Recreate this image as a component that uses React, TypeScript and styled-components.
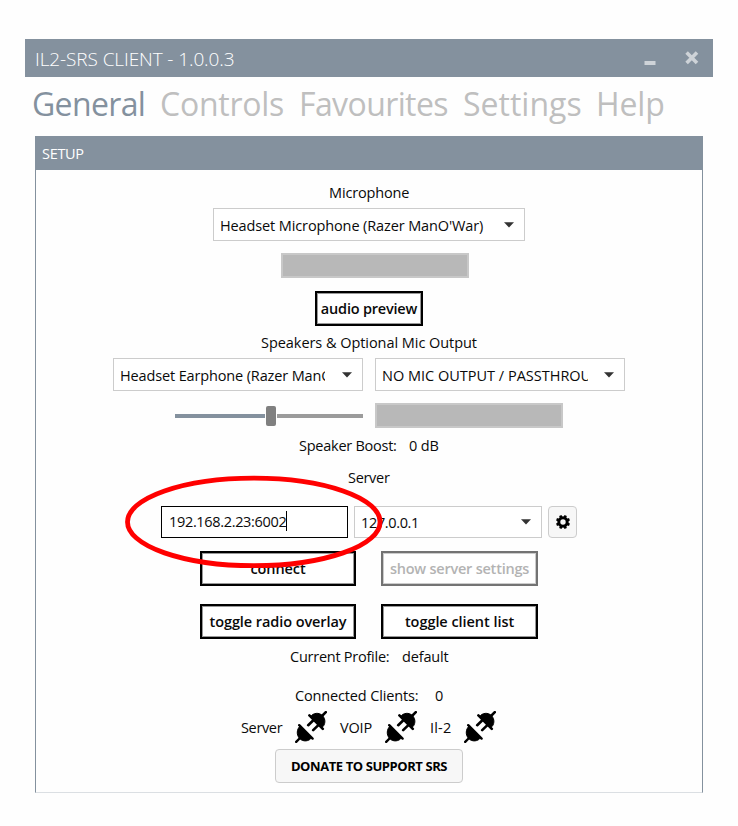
import React from "react";
import styled, { createGlobalStyle } from "styled-components";

const accent = "#84919e";

const GlobalStyle = createGlobalStyle`
  * { box-sizing: border-box; }
  body {
    margin: 0;
    background: #fefefe;
    font-family: "Open Sans", "Noto Sans", sans-serif;
    font-size: 14.5px;
    color: #0a0a0a;
  }
`;

const Page = styled.div`
  position: relative;
  width: 738px;
  height: 826px;
  padding: 39px 25px 0;
`;

const TitleBar = styled.header`
  display: flex;
  align-items: center;
  height: 38px;
  padding: 0 14px 0 10px;
  background: ${accent};
  color: #fff;
`;

const Title = styled.h1`
  flex: 1;
  margin: 0;
  font-size: 19px;
  font-weight: 300;
  line-height: 38px;
  padding-top: 1px;
  letter-spacing: -0.1px;
`;

const WindowButtons = styled.div`
  display: flex;
  gap: 29px;
  align-items: center;
`;

const Tabs = styled.nav`
  display: flex;
  height: 59px;
  padding-left: 7px;
  font-size: 32px;
  line-height: 53px;
`;

const Tab = styled.span<{ $width: number; $active?: boolean; $spacing?: number }>`
  flex: none;
  width: ${(p) => p.$width}px;
  white-space: nowrap;
  letter-spacing: ${(p) => p.$spacing ?? 0}px;
  color: ${(p) => (p.$active ? accent : "#bfbfbf")};
`;

const Panel = styled.section`
  width: 668px;
  height: 657px;
  margin-left: 10px;
  border: 1px solid ${accent};
  border-top: 0;
  border-bottom-color: #dbdfe3;
`;

const PanelHeader = styled.div`
  height: 34px;
  margin: 0 -1px;
  padding-left: 7px;
  line-height: 35px;
  background: ${accent};
  color: #fff;
  letter-spacing: -0.3px;
`;

const Row = styled.div<{ $top?: number; $left: number; $gap?: number; $height: number }>`
  display: flex;
  align-items: center;
  height: ${(p) => p.$height}px;
  margin-top: ${(p) => p.$top ?? 0}px;
  padding-left: ${(p) => p.$left}px;
  gap: ${(p) => p.$gap ?? 0}px;
`;

const Label = styled.span<{ $spacing?: number; $width?: number }>`
  flex: none;
  width: ${(p) => (p.$width ? `${p.$width}px` : "auto")};
  line-height: 20px;
  white-space: nowrap;
  letter-spacing: ${(p) => p.$spacing ?? -0.15}px;
`;

const StatusLabel = styled(Label)<{ $before?: number }>`
  margin-left: ${(p) => p.$before ?? 0}px;
  padding-top: 2px;
`;

const SelectBox = styled.div<{ $width: number; $height?: number }>`
  flex: none;
  display: flex;
  align-items: center;
  justify-content: space-between;
  width: ${(p) => p.$width}px;
  height: ${(p) => p.$height ?? 33}px;
  padding: 0 10px 0 6px;
  border: 1px solid #cccccc;
  background: #fff;
`;

const SelectValue = styled.span<{ $spacing: number; $width: number }>`
  width: ${(p) => p.$width}px;
  overflow: hidden;
  white-space: nowrap;
  line-height: 22px;
  padding-top: 2px;
  letter-spacing: ${(p) => p.$spacing}px;
`;

const Meter = styled.div`
  flex: none;
  width: 188px;
  height: 25px;
  border: 2px solid #c8c8c8;
  background: #b8b8b8;
`;

const Slider = styled.div`
  flex: none;
  display: flex;
  align-items: center;
  gap: 1px;
  width: 188px;
`;

const Track = styled.div<{ $width: number; $color: string }>`
  width: ${(p) => p.$width}px;
  height: 4px;
  background: ${(p) => p.$color};
`;

const Thumb = styled.div`
  width: 10px;
  height: 20px;
  border-radius: 2px;
  background: #808080;
`;

const SquareButton = styled.button<{ $width: number; $spacing?: number }>`
  flex: none;
  width: ${(p) => p.$width}px;
  height: 35px;
  padding: 0;
  border: 2px solid #000;
  box-shadow: inset 0 0 0 1px #999;
  background: #fff;
  color: #0a0a0a;
  font: 600 14.5px "Open Sans", sans-serif;
  letter-spacing: ${(p) => p.$spacing ?? 0}px;
  white-space: nowrap;
  &:disabled {
    border-color: #737373;
    box-shadow: inset 0 0 0 1px #ccc;
    color: #b3b3b3;
  }
`;

const AddressField = styled.div`
  flex: none;
  display: flex;
  align-items: center;
  width: 187px;
  height: 32px;
  padding: 0 0 2px 7px;
  border: 1px solid #000;
  background: #fff;
  letter-spacing: -0.33px;
`;

const Caret = styled.i`
  width: 1px;
  height: 20px;
  background: #000;
`;

const SoftButton = styled.button<{ $width: number; $height: number }>`
  flex: none;
  display: flex;
  align-items: center;
  justify-content: center;
  width: ${(p) => p.$width}px;
  height: ${(p) => p.$height}px;
  padding: 0;
  border: 1px solid #cccccc;
  border-radius: 4px;
  background: #f7f7f7;
  color: #000;
  font: 700 13px "Open Sans", sans-serif;
  letter-spacing: -0.42px;
  white-space: nowrap;
`;

const Highlight = styled.svg`
  position: absolute;
  left: 120px;
  top: 470px;
  pointer-events: none;
`;

const Arrow = () => (
  <svg width="10" height="6" viewBox="0 0 10 6">
    <path d="M0 0.2h10L5 5.6z" fill="#333" />
  </svg>
);

const Select = ({ text, width, textWidth, spacing, height }: {
  text: string; width: number; textWidth: number; spacing: number; height?: number;
}) => (
  <SelectBox $width={width} $height={height}>
    <SelectValue $width={textWidth} $spacing={spacing}>{text}</SelectValue>
    <Arrow />
  </SelectBox>
);

const Gear = () => (
  <svg width="14" height="14" viewBox="-7 -7 14 14">
    <circle r="4.2" fill="none" stroke="#000" strokeWidth="3" />
    {[0, 1, 2, 3, 4, 5, 6, 7].map((i) => (
      <rect key={i} x="-1.3" y="-7" width="2.6" height="2.6" transform={`rotate(${22.5 + i * 45})`} />
    ))}
  </svg>
);

const Plug = () => (
  <svg width="32" height="32" viewBox="0 0 32 32" stroke="#000" strokeLinecap="round">
    <path d="M4.2 14.2 17.6 27.6M1.2 30.8 5 27" strokeWidth="2.4" />
    <path d="M5 15.2 16.6 26.8C14 30.4 8 31.2 4.6 27.4C1.2 24 1.6 18 5 15.2z" strokeWidth="1" />
    <path d="M14.4 4.4 27.8 17.8M30.8 1.2 27 5M18.6 9 13.2 14.2M23.6 13.8 18.2 19.2" strokeWidth="2.6" />
    <path d="M15.6 5.6 26.8 16.8C30.6 13.8 31 8 27.4 4.6C24 1.2 18.4 1.6 15.6 5.6z" strokeWidth="1" />
  </svg>
);

export default function App() {
  return (
    <>
      <GlobalStyle />
      <Page>
        <TitleBar>
          <Title>IL2-SRS CLIENT - 1.0.0.3</Title>
          <WindowButtons>
            <svg width="12" height="14" viewBox="0 0 12 14">
              <path d="M0.5 10h11v4h-11z" fill="#ced3d8" />
            </svg>
            <svg width="14" height="14" viewBox="0 0 14 14">
              <path d="M1.6 1.6 12 12M12 1.6 1.6 12" stroke="#ced3d8" strokeWidth="3.6" />
            </svg>
          </WindowButtons>
        </TitleBar>
        <Tabs>
          <Tab $width={128} $active $spacing={-0.65}>General</Tab>
          <Tab $width={139} $spacing={-0.25}>Controls</Tab>
          <Tab $width={164} $spacing={-0.6}>Favourites</Tab>
          <Tab $width={133} $spacing={0}>Settings</Tab>
          <Tab $width={80} $spacing={-0.1}>Help</Tab>
        </Tabs>
        <Panel>
          <PanelHeader>SETUP</PanelHeader>
          <Row $top={13} $left={293} $height={20}>
            <Label>Microphone</Label>
          </Row>
          <Row $top={5} $left={177} $height={33}>
            <Select text="Headset Microphone (Razer ManO'War)" width={312} textWidth={270} spacing={-0.12} />
          </Row>
          <Row $top={12} $left={245} $height={25}>
            <Meter />
          </Row>
          <Row $top={13} $left={279} $height={35}>
            <SquareButton $width={108} $spacing={-0.2}>audio preview</SquareButton>
          </Row>
          <Row $top={7} $left={225} $height={20}>
            <Label $spacing={-0.05}>Speakers &amp; Optional Mic Output</Label>
          </Row>
          <Row $top={5} $left={77} $gap={12} $height={33}>
            <Select text="Headset Earphone (Razer ManO'War)" width={250} textWidth={205} spacing={-0.14} />
            <Select text="NO MIC OUTPUT / PASSTHROUGH" width={250} textWidth={206} spacing={0} />
          </Row>
          <Row $top={12} $left={139} $gap={12} $height={25}>
            <Slider>
              <Track $width={90} $color={accent} />
              <Thumb />
              <Track $width={86} $color="#9b9b9b" />
            </Slider>
            <Meter />
          </Row>
          <Row $top={8} $left={263} $height={20}>
            <Label $width={110} $spacing={-0.25}>Speaker Boost:</Label>
            <Label>0 dB</Label>
          </Row>
          <Row $top={12} $left={312} $height={20}>
            <Label $spacing={-0.3}>Server</Label>
          </Row>
          <Row $top={18} $left={125} $gap={6} $height={32}>
            <AddressField>192.168.2.23:6002<Caret /></AddressField>
            <Select text="127.0.0.1" width={188} textWidth={120} spacing={-0.35} height={32} />
            <SoftButton $width={29} $height={32} aria-label="Server options"><Gear /></SoftButton>
          </Row>
          <Row $top={13} $left={164} $gap={25} $height={35}>
            <SquareButton $width={156} $spacing={-0.1}>connect</SquareButton>
            <SquareButton $width={157} $spacing={-0.23} disabled>show server settings</SquareButton>
          </Row>
          <Row $top={18} $left={164} $gap={25} $height={35}>
            <SquareButton $width={156} $spacing={-0.08}>toggle radio overlay</SquareButton>
            <SquareButton $width={157} $spacing={-0.05}>toggle client list</SquareButton>
          </Row>
          <Row $top={8} $left={254} $height={20}>
            <Label $width={112} $spacing={-0.25}>Current Profile:</Label>
            <Label>default</Label>
          </Row>
          <Row $top={19} $left={259} $height={20}>
            <Label $width={140}>Connected Clients:</Label>
            <Label>0</Label>
          </Row>
          <Row $top={5} $left={205} $height={32}>
            <StatusLabel $width={54} $spacing={-0.35}>Server</StatusLabel>
            <Plug />
            <StatusLabel $before={13} $width={45}>VOIP</StatusLabel>
            <Plug />
            <StatusLabel $before={13} $width={34} $spacing={0.2}>Il-2</StatusLabel>
            <Plug />
          </Row>
          <Row $top={6} $left={239} $height={34}>
            <SoftButton $width={188} $height={34}>DONATE TO SUPPORT SRS</SoftButton>
          </Row>
        </Panel>
        <Highlight width="270" height="104" viewBox="120 470 270 104">
          <ellipse cx="253.8" cy="521.9" rx="126.3" ry="43.8" fill="none" stroke="#f00" strokeWidth="4.8" />
        </Highlight>
      </Page>
    </>
  );
}
